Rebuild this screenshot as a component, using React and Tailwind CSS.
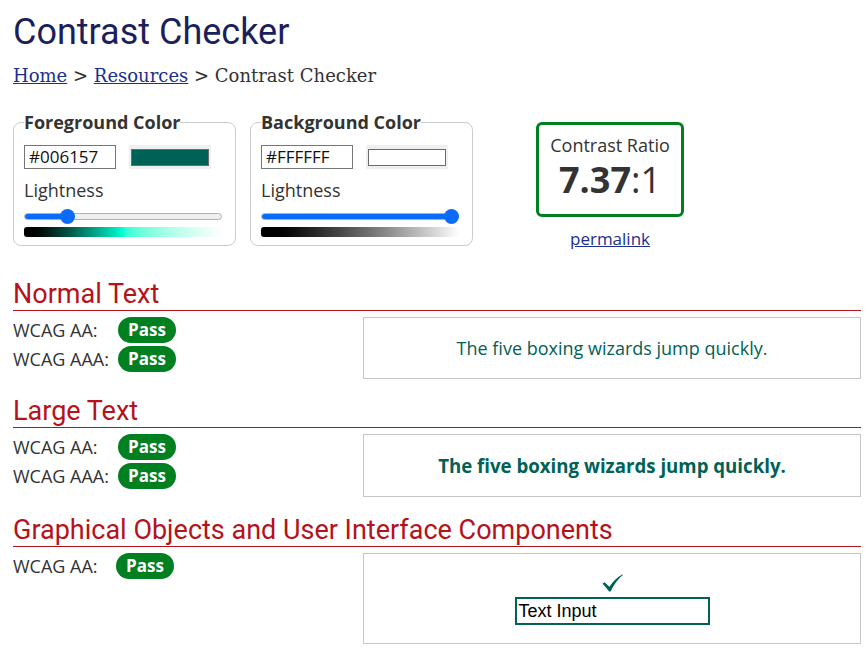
import React from 'react';

function ColorFieldset({ label, hex, swatch, fill, thumbLeft, gradient }) {
    return (
        <fieldset className="w-[223px] rounded-lg border border-[#cccccc] px-[10px] pt-[11px] pb-[8px]">
            <legend className="text-[18px] font-bold leading-[23px] text-[#333333]">
                {label}
            </legend>

            <div className="flex items-center">
                <input
                    type="text"
                    defaultValue={hex}
                    className="h-[24px] w-[92px] border border-[#767676] bg-white px-[4px] text-[17px] text-[#111111] outline-none"
                />
                <div className="ml-[13px] flex h-[24px] w-[82px] items-center bg-[#efefef] px-[2px]">
                    <div className={`h-[17px] w-full border border-[#6b6b6b] ${swatch}`} />
                </div>
            </div>

            <div className="mt-[9px] text-[18px] leading-[24px] text-[#333333]">
                Lightness
            </div>

            <div className="relative mt-[7px] h-[15px] w-[198px]">
                <div className="absolute top-[4px] left-0 flex h-[7px] w-full overflow-hidden rounded-full border border-[#b2b2b2] bg-[#efefef]">
                    <div className={`h-full bg-[#0b6cfb] ${fill}`} />
                </div>
                <div
                    className={`absolute top-0 h-[15px] w-[15px] rounded-full bg-[#0b6cfb] ${thumbLeft}`}
                />
            </div>

            <div className={`mt-[3px] h-[10px] w-[198px] rounded-[3px] ${gradient}`} />
        </fieldset>
    );
}

function Pass() {
    return (
        <span className="inline-flex h-[26px] items-center rounded-full bg-[#008020] px-[10px] text-[17px] font-bold text-white">
            Pass
        </span>
    );
}

function Row({ label, labelWidth }) {
    return (
        <div className="flex h-[26px] items-center">
            <span className={`${labelWidth} text-[18px] leading-[26px] text-[#333333]`}>
                {label}
            </span>
            <Pass />
        </div>
    );
}

function Section({ title, rows, children, boxClass, className, labelWidth = 'w-[105px]' }) {
    return (
        <section className={className}>
            <h2 className="border-b border-[#b5121b] font-['Roboto',sans-serif] text-[27px] leading-[32px] text-[#b5121b]">
                {title}
            </h2>
            <div className="mt-[6px] flex items-start">
                <div className="flex w-[350px] flex-col gap-[3px]">
                    {rows.map((r) => (
                        <Row key={r} label={r} labelWidth={labelWidth} />
                    ))}
                </div>
                <div
                    className={`flex flex-1 flex-col items-center justify-center border border-[#c6c6c6] ${boxClass}`}
                >
                    {children}
                </div>
            </div>
        </section>
    );
}

function Check() {
    return (
        <svg width="21" height="18" viewBox="0 0 21 18" className="text-[#006157]">
            <path
                d="M0.5 9.5 L2.6 8.3 L7.4 12.8 Q12.5 5 20.5 0.3 L20.8 1.1 Q13.6 7 8.6 17.5 L7.2 17.5 Z"
                fill="currentColor"
            />
        </svg>
    );
}

export default function App() {
    return (
        <main className="min-h-screen bg-white pl-[13px] pr-[6px] font-['Open_Sans',sans-serif] text-[#333333]">
            <h1 className="pt-[11px] font-['Roboto',sans-serif] text-[36px] leading-[42px] font-normal text-[#1c1f5c]">
                Contrast Checker
            </h1>

            <nav className="mt-[11px] font-['DejaVu_Serif',serif] text-[18px] leading-[24px] text-[#333333]">
                <a href="#" className="text-[#1a2f8f] underline">
                    Home
                </a>{' '}
                &gt;{' '}
                <a href="#" className="text-[#1a2f8f] underline">
                    Resources
                </a>{' '}
                &gt; Contrast Checker
            </nav>

            <div className="mt-[23px] flex items-start">
                <ColorFieldset
                    label="Foreground Color"
                    hex="#006157"
                    swatch="bg-[#006157]"
                    fill="w-[44px]"
                    thumbLeft="left-[36px]"
                    gradient="bg-linear-to-r from-black via-[#00ffd4] to-white"
                />
                <div className="ml-[14px]">
                    <ColorFieldset
                        label="Background Color"
                        hex="#FFFFFF"
                        swatch="bg-white"
                        fill="w-full"
                        thumbLeft="left-[183px]"
                        gradient="bg-linear-to-r from-black to-white"
                    />
                </div>

                <div className="mt-[11px] ml-[63px] flex w-[148px] flex-col items-center">
                    <div className="flex h-[95px] w-[148px] flex-col items-center rounded-md border-[3px] border-[#008020] pt-[8px]">
                        <div className="text-[18px] leading-[25px] text-[#333333]">
                            Contrast Ratio
                        </div>
                        <div className="text-[36px] leading-[44px] text-[#333333]">
                            <span className="font-bold">7.37</span>:1
                        </div>
                    </div>
                    <a
                        href="#"
                        className="mt-[10px] text-[17px] leading-[24px] text-[#1a2f8f] underline"
                    >
                        permalink
                    </a>
                </div>
            </div>

            <Section
                title="Normal Text"
                rows={['WCAG AA:', 'WCAG AAA:']}
                boxClass="h-[62px]"
                className="mt-[27px]"
            >
                <p className="text-[18px] text-[#006157]">
                    The five boxing wizards jump quickly.
                </p>
            </Section>

            <Section
                title="Large Text"
                rows={['WCAG AA:', 'WCAG AAA:']}
                boxClass="h-[63px]"
                className="mt-[16px]"
            >
                <p className="text-[18.67px] font-bold text-[#006157]">
                    The five boxing wizards jump quickly.
                </p>
            </Section>

            <Section
                title="Graphical Objects and User Interface Components"
                rows={['WCAG AA:']}
                labelWidth="w-[103px]"
                boxClass="h-[91px] pt-[1px]"
                className="mt-[17px] pb-[20px]"
            >
                <Check />
                <div className="mt-[5px] h-[28px] w-[195px] border-2 border-[#006157] px-[2px] font-['Liberation_Sans',sans-serif] text-[18px] leading-[24px] text-black">
                    Text Input
                </div>
            </Section>
        </main>
    );
}
